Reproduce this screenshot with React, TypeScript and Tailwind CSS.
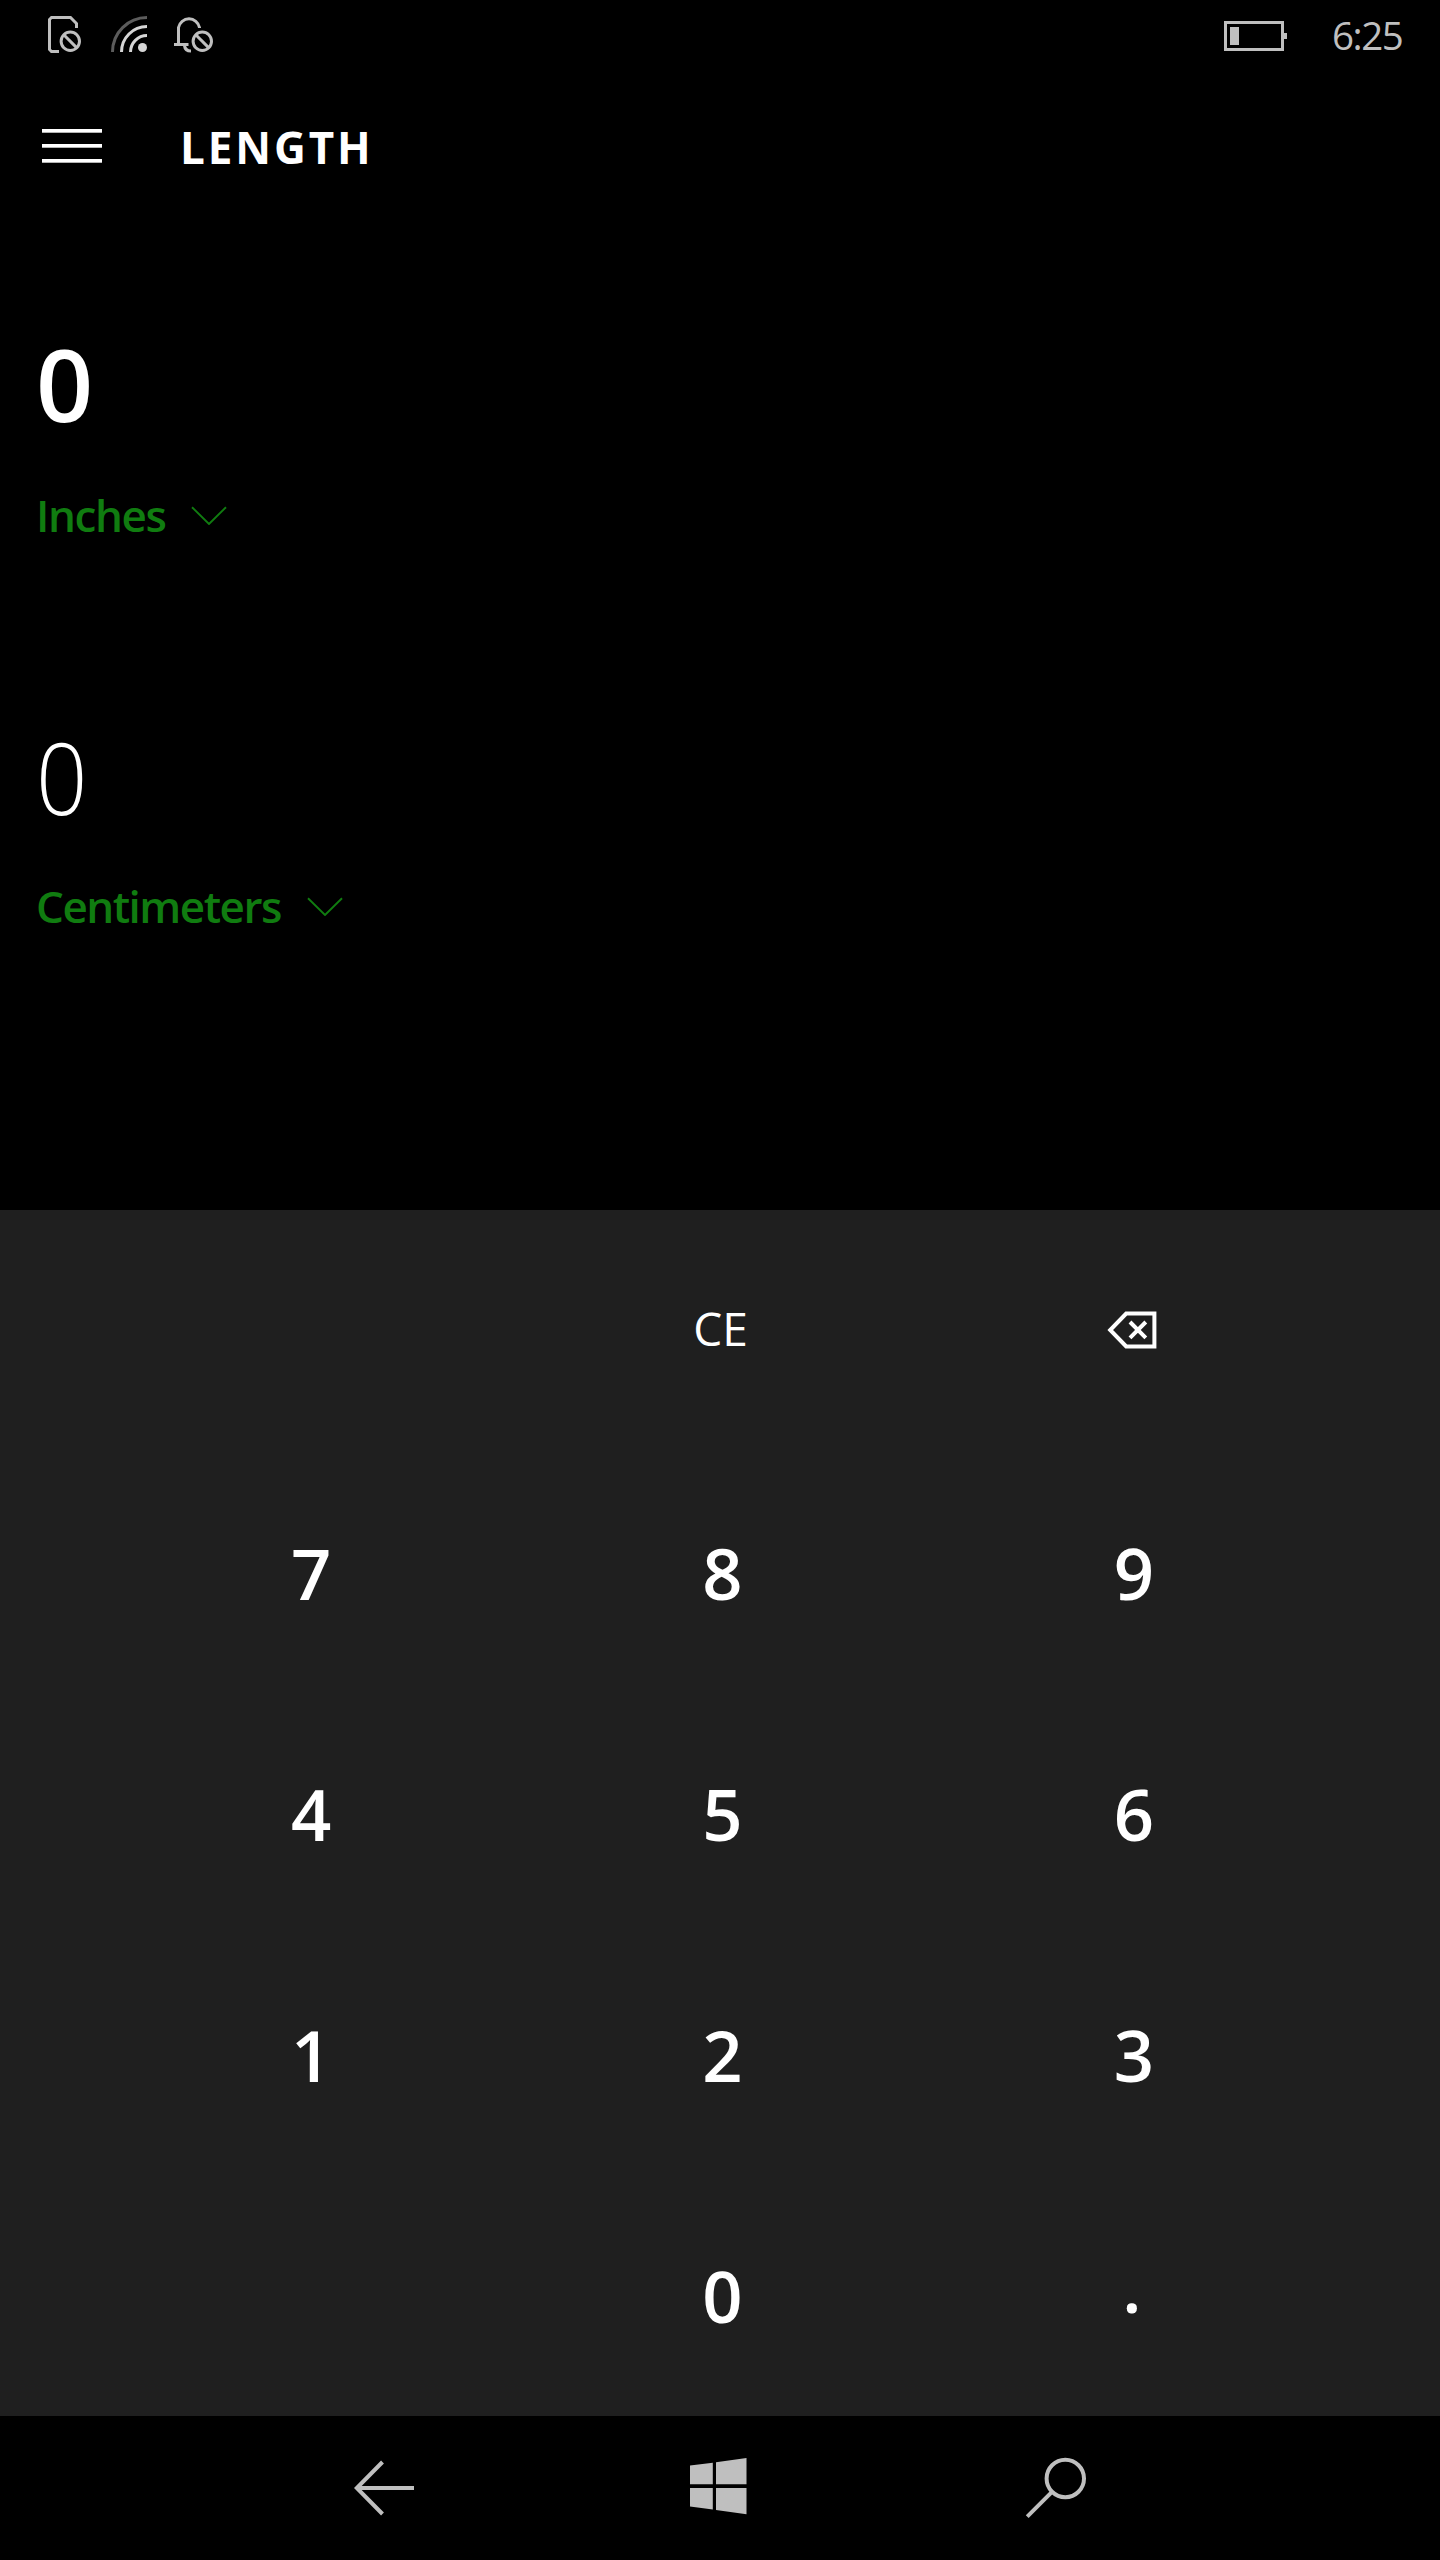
import React from "react";

function SimIcon() {
  return (
    <svg width="36" height="40" viewBox="0 0 36 40" fill="none" stroke="#bfbfbf" strokeWidth="3">
      <path d="M12 36.5H4.5L2.5 34.5V4.5L4.5 2.5H23.5L29.5 8.5V13" />
      <circle cx="23.3" cy="26.3" r="9.2" />
      <path d="M17 20L29.6 32.6" />
    </svg>
  );
}

function WifiIcon() {
  return (
    <svg width="36" height="36" viewBox="0 0 36 36" fill="none" stroke="#d6d6d6" strokeWidth="3">
      <path d="M1.5 36A34.5 34.5 0 0 1 36 1.5" stroke="#5c5c5c" />
      <path d="M10.5 36A25.5 25.5 0 0 1 36 10.5" />
      <path d="M19.5 36A16.5 16.5 0 0 1 36 19.5" />
      <circle cx="31.5" cy="31.5" r="4.5" fill="#d6d6d6" stroke="none" />
    </svg>
  );
}

function BellIcon() {
  return (
    <svg width="40" height="40" viewBox="0 0 40 40" fill="none" stroke="#bfbfbf" strokeWidth="3">
      <path d="M0 29.5H14.5M4.5 29V12.5A10.7 10.7 0 0 1 25.5 12.5V13" />
      <path d="M10.5 30.5Q11 36 17 36" />
      <circle cx="28.3" cy="26.3" r="9.2" />
      <path d="M22 20L34.6 32.6" />
    </svg>
  );
}

function BatteryIcon() {
  return (
    <svg width="63" height="30" viewBox="0 0 63 30" fill="#bfbfbf">
      <path d="M0 0H60V30H0ZM3 3V27H57V3Z" fillRule="evenodd" />
      <path d="M60 12H63V18H60ZM6 6H15V24H6Z" />
    </svg>
  );
}

function MenuIcon() {
  return (
    <svg width="60" height="34" viewBox="0 0 60 34" fill="#fff">
      <rect width="60" height="3.7" />
      <rect y="15" width="60" height="3.7" />
      <rect y="30" width="60" height="3.7" />
    </svg>
  );
}

function Chevron() {
  return (
    <svg width="36" height="20" viewBox="0 0 36 20" fill="none" stroke="#107c10" strokeWidth="1.9">
      <path d="M1 2.2L18 19L35 2.2" />
    </svg>
  );
}

function BackspaceIcon() {
  return (
    <svg width="50" height="38" viewBox="0 0 50 38" fill="none" stroke="#fff" strokeWidth="4">
      <path d="M19.2 2.5H47.4V35.5H19.2L3.2 19Z" />
      <path d="M23 11L38.8 26.8M38.8 11L23 26.8" />
    </svg>
  );
}

const rows = [
  ["7", "8", "9"],
  ["4", "5", "6"],
  ["1", "2", "3"],
  ["", "0", "."],
];

export default function App() {
  return (
    <div className="flex h-[2560px] w-[1440px] flex-col overflow-hidden bg-black font-['Open_Sans',sans-serif] text-white">
      <header className="flex h-[72px] items-start">
        <div className="flex pt-[15px] pl-[47px]">
          <SimIcon />
          <div className="ml-7 pt-px">
            <WifiIcon />
          </div>
          <div className="ml-[27px]">
            <BellIcon />
          </div>
        </div>
        <div className="ml-auto flex pr-[37px]">
          <div className="pt-[21px]">
            <BatteryIcon />
          </div>
          <span className="ml-[45px] w-[71px] text-[38.5px] leading-[70px] font-normal tracking-[-1.5px] text-[#bfbfbf]">6:25</span>
        </div>
      </header>

      <div className="flex h-[148px] items-start">
        <button className="mt-[57px] ml-[42px]">
          <MenuIcon />
        </button>
        <h1 className="mt-[43px] ml-[78px] text-[44px] leading-[64px] font-bold tracking-[2.9px]">LENGTH</h1>
      </div>

      <main className="flex h-[990px] flex-col pl-9">
        <div className="mt-[103px] text-[100px] leading-[120px] font-semibold">0</div>
        <button className="mt-[42px] flex h-[60px] items-center text-[#107c10]">
          <span className="w-[155px] text-left text-[44px] leading-[60px] font-semibold tracking-[-1.4px]">Inches</span>
          <Chevron />
        </button>
        <div className="mt-[171px] w-[60px] origin-left scale-x-[0.9] text-[100px] leading-[120px] font-[330]">0</div>
        <button className="mt-10 flex h-[60px] items-center text-[#107c10]">
          <span className="w-[271px] text-left text-[44px] leading-[60px] font-semibold tracking-[-1.5px]">Centimeters</span>
          <Chevron />
        </button>
      </main>

      <section className="flex h-[1206px] flex-col bg-[#1f1f1f] pr-[100px] pl-[106px]">
        <div className="grid h-[242px] grid-cols-3 place-items-center pb-[7px]">
          <span />
          <button className="pr-[5px] text-[46px] leading-[60px]">CE</button>
          <button className="pt-[5px] pr-[5px]">
            <BackspaceIcon />
          </button>
        </div>
        {rows.map((row, index) => (
          <div key={index} className="grid h-[241px] grid-cols-3 place-items-center">
            {row.map((label, column) => (
              <button
                key={column}
                className={
                  label === "."
                    ? "pr-[5px] pb-[19px] text-[70px] leading-[100px] font-semibold"
                    : "pr-px text-[70.5px] leading-[100px] font-semibold"
                }
              >
                {label}
              </button>
            ))}
          </div>
        ))}
      </section>

      <nav className="flex h-36 items-start bg-black">
        <button className="mt-[44px] ml-[354px]">
          <svg width="60" height="56" viewBox="0 0 60 56" fill="none" stroke="#bfbfbf" strokeWidth="4">
            <path d="M60 28H3M28.5 2L2.8 28L28.5 54" />
          </svg>
        </button>
        <button className="mt-[42px] ml-[276px]">
          <svg width="57" height="57" viewBox="0 0 57 57" fill="#bfbfbf">
            <path d="M0 7.5L22.8 4.7V26.3H0ZM26 4.2L56.5 0V26.3H26ZM0 30H22.8V51.5L0 48.6ZM26 30H56.5V56.2L26 52Z" />
          </svg>
        </button>
        <button className="mt-[41px] ml-[278px]">
          <svg width="62" height="62" viewBox="0 0 62 62" fill="none" stroke="#bfbfbf" strokeWidth="4">
            <circle cx="40.3" cy="21.5" r="18.7" />
            <path d="M27 34.8L2.2 59.6" />
          </svg>
        </button>
      </nav>
    </div>
  );
}
